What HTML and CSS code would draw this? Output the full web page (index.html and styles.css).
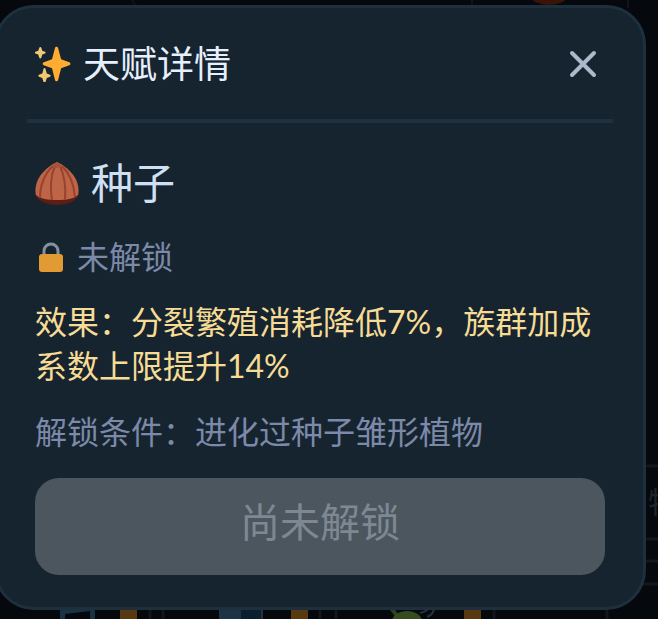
FILE: index.html
```html
<!DOCTYPE html>
<html lang="zh-CN">
<head>
<meta charset="utf-8">
<meta name="viewport" content="width=device-width, initial-scale=1">
<title>天赋详情</title>
<link rel="stylesheet" href="styles.css">
</head>
<body>
<svg class="scene" width="658" height="619" viewBox="0 0 658 619" aria-hidden="true">
  <path d="M132 0l4 6M472 0v6M628 0v8" stroke="#11151b" stroke-width="2" fill="none"/>
  <ellipse cx="549" cy="-4" rx="18" ry="9" fill="#3a1408"/>
  <g stroke="#12171d" stroke-width="3" fill="none">
    <path d="M640 466H658M640 539H658M640 561H658M630 584H658M607 606V619M163 606V619M150 606V619M320 606V619M336 606V619M494 606V619"/>
  </g>
  <text class="scene-text" x="648" y="513">特</text>
  <path d="M60 606H95V619H90V611L65 614V619H60Z" fill="#193344"/>
  <path d="M120 606H137V619H120ZM291 606H308V619H291ZM464 606H481V619H464Z" fill="#59390f"/>
  <path d="M220 606H241V619H220Z" fill="#1b3445"/>
  <path d="M241 606H262V619H241Z" fill="#0a202f"/>
  <path d="M220 606V619M262 606V619" stroke="#26333d" stroke-width="2"/>
  <path d="M391 608L398 617" stroke="#2d4220" stroke-width="4" stroke-linecap="round"/>
  <ellipse cx="407" cy="621" rx="15" ry="10" fill="#344c20"/>
  <path d="M420 613Q428 611 431 606M427 617Q435 614 434 606" stroke="#26323b" stroke-width="2" fill="none"/>
</svg>

<section class="dialog" role="dialog" aria-labelledby="dialog-title">
  <header class="dialog-header">
    <svg class="sparkles" viewBox="0 0 36 36" aria-hidden="true">
      <path fill="#ffac33" d="M34.3 16.3l-8.2-3-3-11.2c-.3-.9-.8-1.3-1.6-1.3s-1.3.4-1.5 1.3l-3 11.2-8.1 3C8 16.6 7.700 17 7.700 17.700s.4 1.200 1.100 1.500l8.200 3.100 3 11.600c.2.9.8 1.300 1.500 1.300s1.400-.4 1.600-1.300l3-11.600 8.200-3.100c.7-.3 1.100-.8 1.100-1.500s-.4-1.100-1.100-1.400z"/>
      <path fill="#f0c873" d="M15 28.700l-3.200-1.200-1.300-4.600c-.2-.6-.5-.9-1-.9s-.9.300-1 .9l-1.200 4.600L4 28.700c-.4.200-.7.500-.7 1s.3.800.7 1l3.300 1.200 1.200 4c.1.500.5.800 1 .8s.8-.3 1-.8l1.300-4L15 30.700c.4-.2.700-.5.700-1s-.3-.8-.7-1zM10 5.700l-2.700-1-1-3C6.100 1.200 5.800.9 5.300.9s-.9.300-1 .8l-1.100 3-2.700 1C.1 5.800-.2 6.100-.2 6.600s.3.800.7 1l2.700 1 1.100 3.200c.1.500.5.800 1 .8s.8-.3 1-.8l1-3.200 2.700-1c.4-.2.700-.5.700-1s-.3-.8-.7-.9z"/>
    </svg>
    <h1 class="title" id="dialog-title">天赋详情</h1>
    <button class="close" type="button" aria-label="关闭">
      <svg class="close-icon" viewBox="0 0 28 28" aria-hidden="true"><path d="M3 3L25 25M25 3L3 25"/></svg>
    </button>
  </header>

  <div class="dialog-body">
    <h2 class="talent">
      <svg class="seed" viewBox="0 0 44 44" aria-hidden="true">
        <path fill="#5c1d15" d="M0 32C1 40 12 44 22 44s21-4 22-12z"/>
        <path fill="#bd6546" d="M22 1C17 3 10 8 5 15 1 21-.5 28 1 34c4 4 12 5 21 5s17-1 21-5c1.500-6 0-13-4-19C34 8 27 3 22 1z"/>
        <path d="M18 5C10 12 5 24 5 37M20 5C16 14 15 27 17 39M25 5C29 14 31 27 30 38M27 5C34 12 39 24 40 36" fill="none" stroke="#97432f" stroke-width="2"/>
        <path d="M16 5Q19 3 22 1Q25 3 28 5L22 7Z" fill="#a9523a"/>
      </svg>
      <span>种子</span>
    </h2>
    <p class="status">
      <svg class="lock" viewBox="0 0 24 30" aria-hidden="true">
        <path d="M5 15V9a7 7 0 0 1 14 0v6" fill="none" stroke="#8492a0" stroke-width="3"/>
        <rect x="0" y="12" width="24" height="18" rx="3" fill="#e19b32"/>
      </svg>
      <span>未解锁</span>
    </p>
    <p class="effect">效果：分裂繁殖消耗降低7%，族群加成系数上限提升14%</p>
    <p class="condition">解锁条件：进化过种子雏形植物</p>
    <button class="action" type="button" disabled>尚未解锁</button>
  </div>
</section>
</body>
</html>
```

FILE: styles.css
```css
* {
  box-sizing: border-box;
}

body {
  margin: 0;
  min-height: 100vh;
  overflow: hidden;
  background: #05080c;
  color: #dbe8fa;
  font-family: Lato, "Noto Sans CJK SC", sans-serif;
}

h1,
h2,
p {
  margin: 0;
  font-weight: 400;
}

.scene {
  position: absolute;
  top: 0;
  left: 0;
}

.scene-text {
  fill: #20242a;
  font-size: 30px;
}

/* The panel runs slightly past the left edge of the window. */
.dialog {
  position: relative;
  margin: 5px 12px 0 -6px;
  padding: 0 30px 32px;
  border: 3px solid #1e303d;
  border-radius: 40px;
  background: #162430;
}

.dialog-header {
  display: flex;
  align-items: center;
  height: 115px;
  padding: 0 8px;
  border-bottom: 4px solid #1f303e;
}

.sparkles {
  width: 36px;
  height: 36px;
  margin-right: 12px;
}

.title {
  flex: 1;
  color: #e6effd;
  font-size: 37px;
  line-height: 48px;
}

.close {
  display: flex;
  padding: 8px;
  border: 0;
  background: none;
}

.close-icon {
  width: 28px;
  height: 28px;
  fill: none;
  stroke: #abb9ca;
  stroke-width: 4;
  stroke-linecap: round;
}

.dialog-body {
  padding: 32px 8px 0;
}

.talent {
  display: flex;
  align-items: center;
  gap: 12px;
  color: #cfe0f5;
  font-size: 42px;
  line-height: 56px;
}

.seed {
  width: 44px;
  height: 44px;
}

.status {
  display: flex;
  align-items: center;
  gap: 14px;
  margin: 24px 0 21px;
  padding-left: 4px;
  color: #7c89a8;
  font-size: 32px;
  line-height: 44px;
}

.lock {
  width: 24px;
  height: 30px;
}

.effect,
.condition {
  font-size: 32px;
  line-height: 44px;
}

.effect {
  color: #f6dc95;
}

.condition {
  margin: 22px 0 24px;
  color: #7c89a8;
}

.action {
  display: block;
  width: 100%;
  height: 97px;
  padding: 0 0 14px;
  border: 0;
  border-radius: 24px;
  background: #4c565f;
  color: #7d8893;
  font: inherit;
  font-size: 40px;
}
```
